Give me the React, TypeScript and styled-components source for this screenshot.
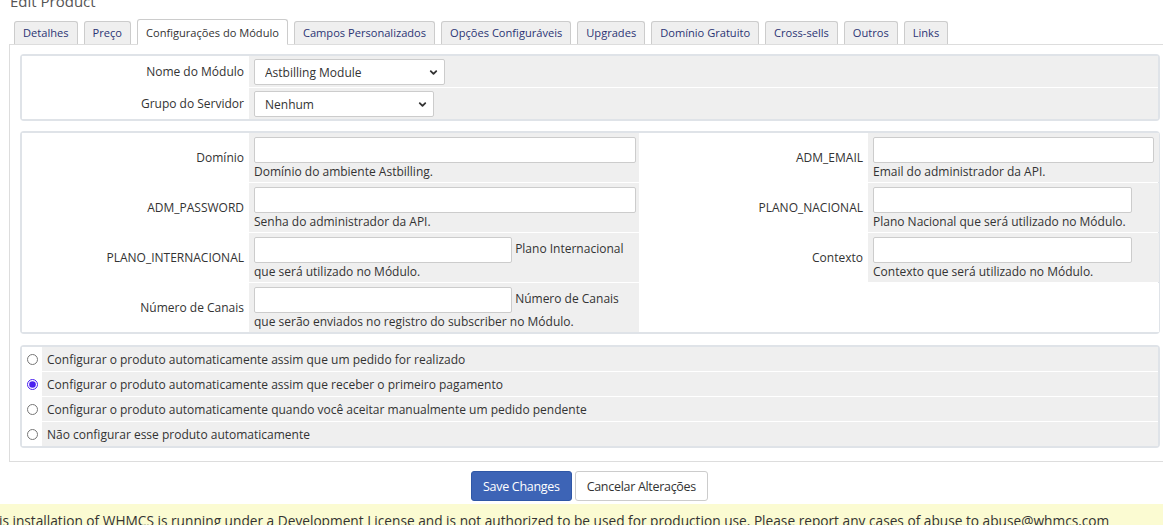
import React from 'react';
import styled, { createGlobalStyle } from 'styled-components';
import { ChevronDown } from 'lucide-react';

const GlobalStyle = createGlobalStyle`
  body {
    margin: 0;
    background: #fff;
    font-family: 'Open Sans', 'Liberation Sans', sans-serif;
    color: #333;
    overflow: hidden;
  }
  * { box-sizing: border-box; }
`;

const tabs = [
  'Detalhes',
  'Preço',
  'Configurações do Módulo',
  'Campos Personalizados',
  'Opções Configuráveis',
  'Upgrades',
  'Domínio Gratuito',
  'Cross-sells',
  'Outros',
  'Links',
];

interface Field {
  label: string;
  help: string;
  wide: boolean;
}

const leftFields: Field[] = [
  { label: 'Domínio', help: 'Domínio do ambiente Astbilling.', wide: true },
  { label: 'ADM_PASSWORD', help: 'Senha do administrador da API.', wide: true },
  {
    label: 'PLANO_INTERNACIONAL',
    help: 'Plano Internacional que será utilizado no Módulo.',
    wide: false,
  },
  {
    label: 'Número de Canais',
    help: 'Número de Canais que serão enviados no registro do subscriber no Módulo.',
    wide: false,
  },
];

const rightFields: (Field | null)[] = [
  { label: 'ADM_EMAIL', help: 'Email do administrador da API.', wide: true },
  {
    label: 'PLANO_NACIONAL',
    help: 'Plano Nacional que será utilizado no Módulo.',
    wide: false,
  },
  { label: 'Contexto', help: 'Contexto que será utilizado no Módulo.', wide: false },
  null,
];

const autoSetup = [
  'Configurar o produto automaticamente assim que um pedido for realizado',
  'Configurar o produto automaticamente assim que receber o primeiro pagamento',
  'Configurar o produto automaticamente quando você aceitar manualmente um pedido pendente',
  'Não configurar esse produto automaticamente',
];

const App: React.FC = () => {
  return (
    <>
      <GlobalStyle />
      <Page>
        <Title>Edit Product</Title>
        <TabBar>
          {tabs.map((t, i) => (
            <Tab key={t} $active={i === 2}>
              {t}
            </Tab>
          ))}
        </TabBar>
        <TabContent>
          <FormTable $cols="227px 1fr">
            <LabelCell>Nome do Módulo</LabelCell>
            <SelectCell>
              <SelectWrap $width={191}>
                <Select defaultValue="astbilling">
                  <option value="astbilling">Astbilling Module</option>
                </Select>
                <Chevron size={11} strokeWidth={4} />
              </SelectWrap>
            </SelectCell>
            <LabelCell>Grupo do Servidor</LabelCell>
            <SelectCell>
              <SelectWrap $width={180}>
                <Select defaultValue="0">
                  <option value="0">Nenhum</option>
                </Select>
                <Chevron size={11} strokeWidth={4} />
              </SelectWrap>
            </SelectCell>
          </FormTable>

          <FormTable $cols="227px 390px 229px 1fr">
            {leftFields.map((f, i) => {
              const r = rightFields[i];
              return (
                <React.Fragment key={f.label}>
                  <LabelCell>{f.label}</LabelCell>
                  <FieldCell>
                    <TextInput $w={f.wide ? 382 : 258} /> {f.wide && <br />}
                    {f.help}
                  </FieldCell>
                  <LabelCell>{r ? r.label : ''}</LabelCell>
                  {r ? (
                    <FieldCell>
                      <TextInput $w={r.wide ? 281 : 259} /> <br />
                      {r.help}
                    </FieldCell>
                  ) : (
                    <LabelCell />
                  )}
                </React.Fragment>
              );
            })}
          </FormTable>

          <RadioTable $cols="20px 1fr">
            {autoSetup.map((o, i) => (
              <React.Fragment key={o}>
                <RadioCell>
                  <Radio
                    type="radio"
                    name="autosetup"
                    id={`as${i}`}
                    defaultChecked={i === 1}
                  />
                </RadioCell>
                <RadioLabel htmlFor={`as${i}`}>{o}</RadioLabel>
              </React.Fragment>
            ))}
          </RadioTable>
        </TabContent>

        <ButtonRow>
          <Button $primary>Save Changes</Button>
          <Button>Cancelar Alterações</Button>
        </ButtonRow>
      </Page>
      <LicenseBanner>
        This installation of WHMCS is running under a Development License and is not
        authorized to be used for production use. Please report any cases of abuse to
        abuse@whmcs.com
      </LicenseBanner>
    </>
  );
};

const Page = styled.div`
  width: 1170px;
  padding-left: 9px;
`;

const Title = styled.h1`
  margin: -9px 0 0 1px;
  font-size: 15px;
  line-height: 20px;
  font-weight: 400;
  color: #555;
`;

const TabBar = styled.div`
  display: flex;
  align-items: flex-end;
  gap: 6px;
  padding-left: 5px;
  height: 34px;
  border-bottom: 1px solid #ddd;
`;

const Tab = styled.div<{ $active?: boolean }>`
  padding: 0 8px;
  height: ${(p) => (p.$active ? '26px' : '23px')};
  line-height: ${(p) => (p.$active ? '25px' : '22px')};
  margin-bottom: ${(p) => (p.$active ? '-1px' : '0')};
  font-size: 11.1px;
  white-space: nowrap;
  color: ${(p) => (p.$active ? '#333' : '#2b3474')};
  background: ${(p) => (p.$active ? '#fff' : '#efefef')};
  border: 1px solid #ccc;
  border-bottom: ${(p) => (p.$active ? '1px solid #fff' : 'none')};
  border-radius: 3px 3px 0 0;
  cursor: pointer;
`;

const TabContent = styled.div`
  border-left: 1px solid #ddd;
  border-bottom: 1px solid #ddd;
  padding: 9px 10px 13px 10px;
  display: flex;
  flex-direction: column;
  gap: 10px;
`;

const FormTable = styled.div<{ $cols: string }>`
  display: grid;
  grid-template-columns: ${(p) => p.$cols};
  row-gap: 1px;
  border: 2px solid #dfe3e8;
  border-radius: 4px;
  background: #fff;
`;

const RadioTable = styled(FormTable)`
  margin-top: 1px;
`;

const LabelCell = styled.div`
  background: #fff;
  display: flex;
  align-items: center;
  justify-content: flex-end;
  padding: 3px 5px;
  font-size: 12px;
  text-align: right;
`;

const FieldCell = styled.div`
  background: #efefef;
  padding: 4px 5px 2px 5px;
  font-size: 12px;
  line-height: 17px;
`;

const SelectCell = styled.div`
  background: #efefef;
  padding: 3px 5px 2px 5px;
`;

const SelectWrap = styled.div<{ $width: number }>`
  position: relative;
  width: ${(p) => p.$width}px;
  height: 26px;
`;

const Select = styled.select`
  appearance: none;
  display: block;
  width: 100%;
  height: 26px;
  padding: 0 24px 0 10px;
  font-family: 'Open Sans', sans-serif;
  font-size: 12px;
  color: #333;
  background: #fff;
  border: 1px solid #ccc;
  border-radius: 2px;
`;

const Chevron = styled(ChevronDown)`
  position: absolute;
  right: 6px;
  top: 8px;
  color: #333;
  pointer-events: none;
`;

const TextInput = styled.input<{ $w: number }>`
  display: inline-block;
  vertical-align: middle;
  width: ${(p) => p.$w}px;
  height: 26px;
  border: 1px solid #ccc;
  border-radius: 2px;
  background: #fff;
  margin: 0;
`;

const RadioCell = styled.div`
  background: #fff;
  display: flex;
  align-items: center;
  justify-content: center;
`;

const Radio = styled.input`
  width: 11px;
  height: 11px;
  margin: 0;
  accent-color: #4a1ff0;
`;

const RadioLabel = styled.label`
  background: #efefef;
  padding: 0 5px;
  height: 24px;
  display: flex;
  align-items: center;
  font-size: 12px;
`;

const ButtonRow = styled.div`
  display: flex;
  justify-content: center;
  gap: 3px;
  padding-top: 9px;
  height: 42px;
`;

const Button = styled.button<{ $primary?: boolean }>`
  height: 30px;
  padding: 0 11px;
  font-family: 'Open Sans', sans-serif;
  font-size: 12.5px;
  letter-spacing: -0.3px;
  color: ${(p) => (p.$primary ? '#fff' : '#333')};
  background: ${(p) => (p.$primary ? '#3d64b6' : '#fff')};
  border: 1px solid ${(p) => (p.$primary ? '#2f57a6' : '#ccc')};
  border-radius: 3px;
  cursor: pointer;
`;

const LicenseBanner = styled.div`
  background: #fbfbd2;
  padding: 8px 0 6px 0;
  text-indent: -17px;
  white-space: nowrap;
  font-size: 13.7px;
  line-height: 18px;
  color: #333;
  overflow: hidden;
`;

export default App;
